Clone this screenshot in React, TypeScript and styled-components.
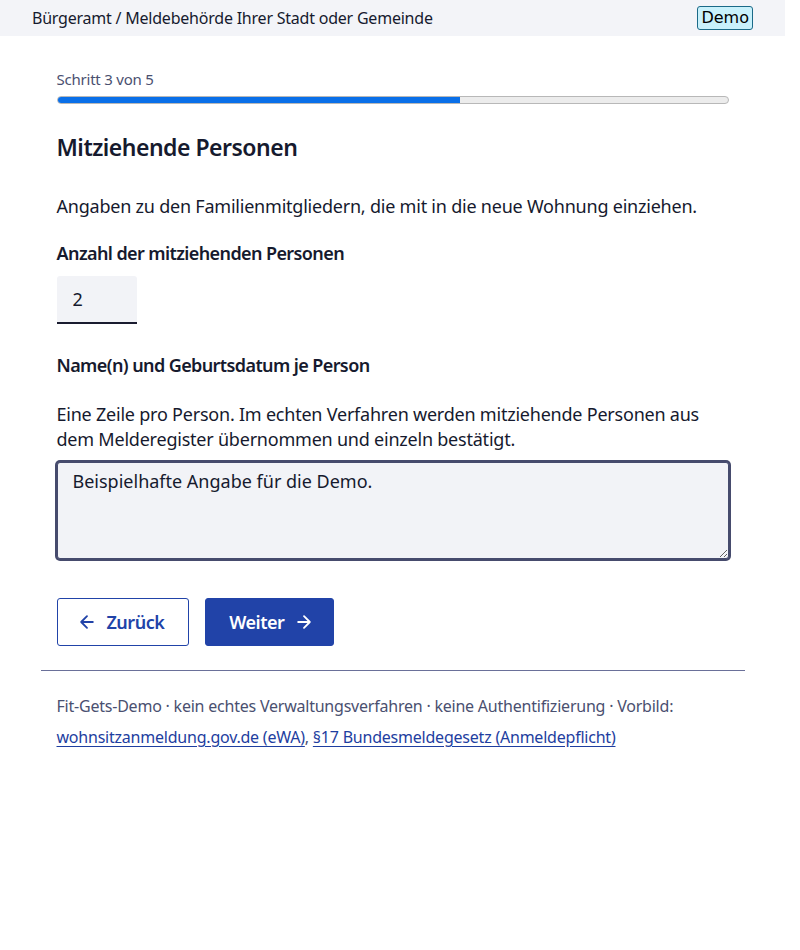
import React from "react"
import styled, { createGlobalStyle } from "styled-components"

const GlobalStyle = createGlobalStyle`
	html, body {
		margin: 0;
		padding: 0;
		background: #ffffff;
	}
	body {
		font-family: "Noto Sans", "Open Sans", sans-serif;
		color: #161a2e;
		letter-spacing: -0.22px;
	}
	* {
		box-sizing: border-box;
	}
`

const Page = styled.div`
	width: 785px;
`

const TopBar = styled.header`
	height: 36px;
	background: #f3f4f8;
	display: flex;
	align-items: center;
	justify-content: space-between;
	padding: 0 32px;
	font-size: 16px;
	color: #161a2e;
`

const Badge = styled.span`
	font-family: "DejaVu Sans", sans-serif;
	font-size: 16px;
	letter-spacing: 0;
	line-height: 22px;
	padding: 0 3px;
	background: #c9f1fb;
	border: 1px solid #1b6a88;
	border-radius: 3px;
	color: #000;
`

const Main = styled.main`
	max-width: 704px;
	margin: 0 auto;
	padding: 32px 16px 24px;
`

const StepText = styled.div`
	font-size: 15px;
	color: #4a5070;
	line-height: 22px;
`

const Track = styled.div`
	margin-top: 6px;
	height: 8px;
	border-radius: 4px;
	background: #ececec;
	border: 1px solid #b8b8b8;
	overflow: hidden;
	display: flex;
`

const Fill = styled.div`
	height: 100%;
	background: #0a6fe8;
`

const Heading = styled.h1`
	font-size: 23px;
	font-weight: 600;
	letter-spacing: -0.5px;
	margin: 26px 0 0;
	line-height: 34px;
`

const Text = styled.p`
	font-size: 18px;
	line-height: 25px;
	margin: 0;
`

const Lead = styled(Text)`
	margin-top: 30px;
`

const Label = styled.label`
	display: block;
	font-size: 18px;
	font-weight: 600;
	letter-spacing: -0.6px;
	line-height: 25px;
	margin-top: ${(p: { gap: number }) => p.gap}px;
`

const NumberInput = styled.input`
	display: block;
	margin-top: 10px;
	width: 80px;
	height: 48px;
	padding: 0 16px;
	border: none;
	border-bottom: 2px solid #1a1c30;
	border-radius: 3px 3px 0 0;
	background: #f2f3f7;
	font: inherit;
	font-size: 18px;
	color: #161a2e;
`

const Hint = styled(Text)`
	margin-top: 24px;
`

const TextArea = styled.textarea`
	display: block;
	margin-top: 10px;
	width: 100%;
	height: 97px;
	padding: 6px 15px;
	border: 1px solid #464b6d;
	box-shadow: 0 0 0 2px #464b6d;
	border-radius: 3px;
	background: #f2f3f7;
	font: inherit;
	font-size: 18px;
	line-height: 25px;
	color: #161a2e;
	outline: none;
`

const Actions = styled.div`
	display: flex;
	gap: 16px;
	margin-top: 39px;
`

interface ButtonProps {
	primary?: boolean
}

const Button = styled.button<ButtonProps>`
	display: flex;
	align-items: center;
	gap: 10px;
	height: 48px;
	padding: ${(p) => (p.primary ? "0 19px 0 23px" : "0 24px 0 19px")};
	border-radius: 3px;
	border: 1px solid #2143a8;
	background: ${(p) => (p.primary ? "#2143a8" : "#ffffff")};
	color: ${(p) => (p.primary ? "#ffffff" : "#2143a8")};
	font: inherit;
	font-size: 18px;
	font-weight: 600;
	letter-spacing: -0.5px;
	cursor: pointer;
`

const Footer = styled.footer`
	max-width: 704px;
	margin: 0 auto;
	border-top: 1px solid #6a7099;
	padding: 20px 16px;
	font-size: 16px;
	line-height: 31px;
	color: #4a5070;
`

const Link = styled.a`
	color: #1e3ea0;
	text-decoration: underline;
	text-underline-offset: 3px;
`

const Arrow = ({ dir }: { dir: "left" | "right" }) => (
	<svg width="20" height="20" viewBox="0 0 24 24" fill="none" stroke="currentColor" strokeWidth="2.2" strokeLinecap="round" strokeLinejoin="round">
		{dir === "left" ? (
			<path d="M19 12H5M12 19l-7-7 7-7" />
		) : (
			<path d="M5 12h14M12 5l7 7-7 7" />
		)}
	</svg>
)

export default function App() {
	const step = 3
	const total = 5
	return (
		<Page>
			<GlobalStyle />
			<TopBar>
				<span>Bürgeramt / Meldebehörde Ihrer Stadt oder Gemeinde</span>
				<Badge>Demo</Badge>
			</TopBar>
			<Main>
				<StepText>
					Schritt {step} von {total}
				</StepText>
				<Track>
					<Fill style={{ width: `${(step / total) * 100}%` }} />
				</Track>
				<Heading>Mitziehende Personen</Heading>
				<Lead>Angaben zu den Familienmitgliedern, die mit in die neue Wohnung einziehen.</Lead>
				<Label gap={22} htmlFor="anzahl">
					Anzahl der mitziehenden Personen
				</Label>
				<NumberInput id="anzahl" defaultValue="2" />
				<Label gap={29} htmlFor="namen">
					Name(n) und Geburtsdatum je Person
				</Label>
				<Hint>
					Eine Zeile pro Person. Im echten Verfahren werden mitziehende Personen aus dem Melderegister übernommen und
					einzeln bestätigt.
				</Hint>
				<TextArea id="namen" defaultValue="Beispielhafte Angabe für die Demo." />
				<Actions>
					<Button>
						<Arrow dir="left" />
						Zurück
					</Button>
					<Button primary>
						Weiter
						<Arrow dir="right" />
					</Button>
				</Actions>
			</Main>
			<Footer>
				Fit-Gets-Demo · kein echtes Verwaltungsverfahren · keine Authentifizierung · Vorbild:
				<br />
				<Link href="#">wohnsitzanmeldung.gov.de (eWA)</Link>, <Link href="#">§17 Bundesmeldegesetz (Anmeldepflicht)</Link>
			</Footer>
		</Page>
	)
}
